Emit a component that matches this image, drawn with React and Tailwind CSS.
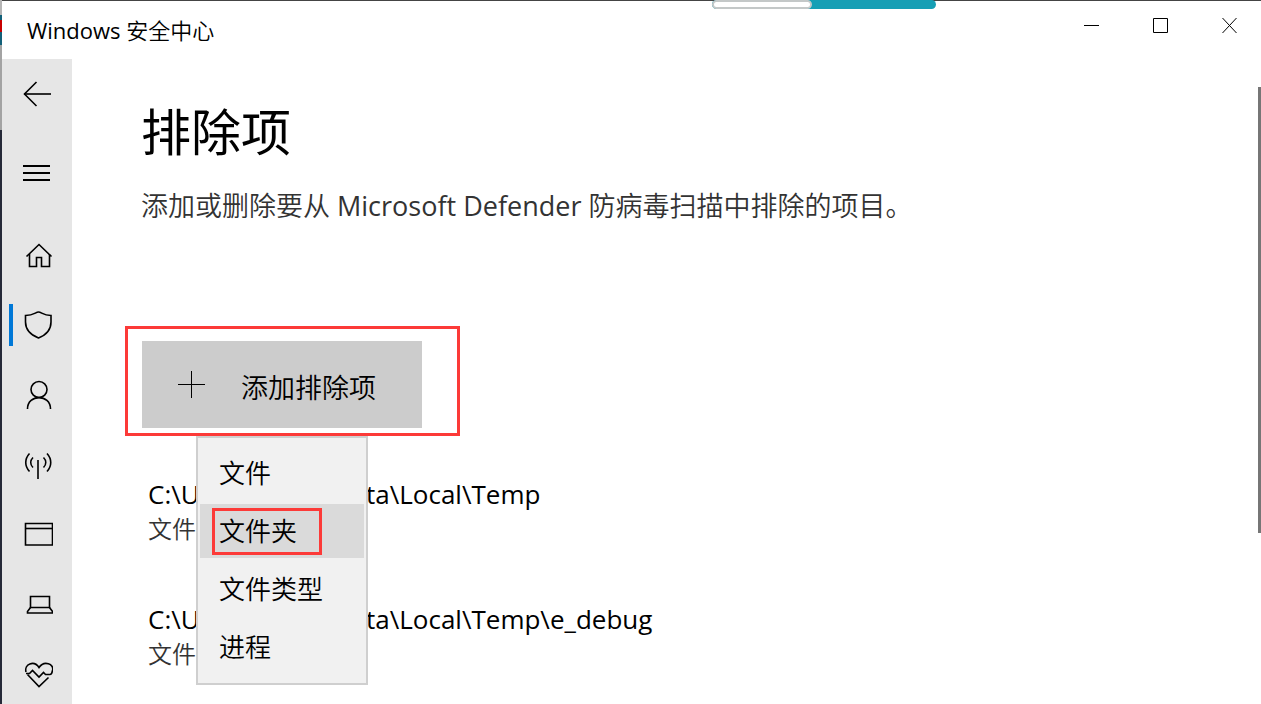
import { useState } from "react";

const iconPaths = {
  back: ["M3.5 16H30", "M15.5 4L3.5 16L15.5 28"],
  home: ["M5.5 17.5L18 5.5L30.5 17.5", "M8.5 15V27.5H15.5V18.5H20.5V27.5H28.5V15"],
  shield: [
    "M17.5 3C14.5 3 13 6.5 4.5 6.5V13C4.5 21 10 26 17.5 29C25 26 30 21 30 13V6.5C22 6.5 20.5 3 17.5 3Z",
  ],
  account: ["M10 10.5A8 8 0 1 0 26 10.5A8 8 0 1 0 10 10.5Z", "M6.5 30C6.5 14.8 29.5 14.8 29.5 30"],
  network: [
    "M17 11V30",
    "M8.5 4.5C3.5 10 3.5 17 8.5 22.5",
    "M26 4.5C31 10 31 17 26 22.5",
    "M12 8.5C9 11.5 9 15.5 12 18.5",
    "M22.5 8.5C25.5 11.5 25.5 15.5 22.5 18.5",
  ],
  app: ["M4.5 4.5H31.5V26H4.5Z", "M4.5 9.5H31.5"],
  device: ["M9.5 18.5V7.5H28.5V18.5Z", "M9.5 18.5L6.5 22.5V24H31.5V22.5L28.5 18.5"],
  health: [
    "M5 13C3 5 13 1 18 8.5C23 1 33.5 5 31.5 11.5C31 14.5 30 15.5 29 15.5H24.5L22.5 13.5L18 18L11.5 11.5L8.5 14.5H5",
    "M6.5 15.5L18 27.5L27.5 18.5",
  ],
};

const navItems = [
  { id: "home", label: "主页" },
  { id: "shield", label: "病毒和威胁防护" },
  { id: "account", label: "帐户保护" },
  { id: "network", label: "防火墙和网络保护" },
  { id: "app", label: "应用和浏览器控制" },
  { id: "device", label: "设备安全性" },
  { id: "health", label: "设备性能和运行状况" },
];

const menuItems = ["文件", "文件夹", "文件类型", "进程"];

const exclusions = [
  { start: "C:\\U", end: "ta\\Local\\Temp", type: "文件" },
  { start: "C:\\U", end: "ta\\Local\\Temp\\e_debug", type: "文件" },
];

function Icon({ name }) {
  return (
    <svg width="32" height="32" viewBox="0 0 32 32" fill="none" stroke="black" strokeWidth="1.6">
      {iconPaths[name].map((d) => (
        <path key={d} d={d} />
      ))}
    </svg>
  );
}

function TitleBar() {
  return (
    <header className="relative flex h-[59px] shrink-0 justify-between border-t border-[#444] bg-white">
      <div className="pt-[13px] pl-[25px] text-[22px] leading-8">
        <span className="font-normal">Windows</span> 安全中心
      </div>
      {/* progress bar of the window behind */}
      <div className="absolute -top-px left-[710px] flex h-[9px] w-[224px] rounded-full bg-[#169fb5]">
        <div className="w-[100px] rounded-full border-2 border-[#c4c8c8] bg-white" />
      </div>
      <div className="flex h-12 gap-1.5">
        <button aria-label="最小化" className="flex w-[63px] items-center justify-center">
          <svg width="15" height="16" stroke="black" fill="none">
            <path d="M0 8.5H15" />
          </svg>
        </button>
        <button aria-label="最大化" className="flex w-[63px] items-center justify-center">
          <svg width="15" height="16" stroke="black" fill="none">
            <path d="M0.5 1.5H14.5V15.5H0.5Z" />
          </svg>
        </button>
        <button aria-label="关闭" className="flex w-[63px] items-center justify-center">
          <svg width="15" height="16" stroke="black" fill="none">
            <path d="M0.5 1L14.5 16M14.5 1L0.5 16" />
          </svg>
        </button>
      </div>
    </header>
  );
}

function Sidebar({ active, onSelect }) {
  return (
    <nav className="flex w-[70px] shrink-0 flex-col bg-[#e6e6e6]">
      <button aria-label="返回" className="flex h-[70px] shrink-0 items-center justify-center">
        <Icon name="back" />
      </button>
      <button aria-label="菜单" className="mt-[9px] mb-3 flex h-[70px] shrink-0 items-center justify-center">
        <svg width="32" height="32" viewBox="0 0 32 32" stroke="black" strokeWidth="2">
          <path d="M2 9H29M2 16H29M2 23H29" />
        </svg>
      </button>
      {navItems.map((item) => (
        <button
          key={item.id}
          aria-label={item.label}
          onClick={() => onSelect(item.id)}
          className="relative flex h-[70px] shrink-0 items-center justify-center"
        >
          {active === item.id && <span className="absolute left-[7px] h-[42px] w-1 bg-[#0078d7]" />}
          <Icon name={item.id} />
        </button>
      ))}
    </nav>
  );
}

function AddMenu({ selected, onSelect }) {
  return (
    <div
      role="menu"
      className="absolute top-[107px] left-[68px] z-10 flex h-[249px] w-[172px] flex-col gap-1 border-2 border-[#cfcfcf] bg-[#f1f1f1] px-0.5 pt-2 text-[26px] leading-[38px]"
    >
      {menuItems.map((item) => (
        <button
          key={item}
          role="menuitem"
          onClick={() => onSelect(item)}
          className={
            item === selected
              ? "flex h-[54px] items-center bg-[#dadada] pl-3"
              : "flex h-[54px] items-center pl-[19px]"
          }
        >
          {item === selected ? (
            <span className="flex h-[47px] w-[110px] items-center border-3 border-[#fc3a38] pl-1">
              {item}
            </span>
          ) : (
            item
          )}
        </button>
      ))}
    </div>
  );
}

export default function App() {
  const [active, setActive] = useState("shield");
  const [selected, setSelected] = useState("文件夹");
  const [menuOpen, setMenuOpen] = useState(true);

  return (
    <div className="flex h-screen overflow-hidden bg-white font-['Open_Sans','Noto_Sans_CJK_SC',sans-serif] font-[350] text-black">
      {/* edge of the desktop behind the window */}
      <div className="flex w-0.5 shrink-0 flex-col bg-[#262938]">
        <div className="h-[15px] bg-[#b5b5b5]" />
        <div className="h-[5px] bg-[#126079]" />
        <div className="h-3 bg-[#c80000]" />
        <div className="h-[13px] bg-[#126079]" />
        <div className="h-[85px] bg-[#a3a3a3]" />
      </div>
      <div className="flex min-w-0 flex-1 flex-col">
        <TitleBar />
        <div className="flex min-h-0 flex-1">
          <Sidebar active={active} onSelect={setActive} />
          <main className="min-w-0 flex-1 pt-9 pl-[69px]">
            <h1 className="text-[50px] leading-[74px] font-normal">排除项</h1>
            <p className="mt-4 text-[27px] leading-[42px] text-[#333]">
              添加或删除要从 <span className="font-normal">Microsoft Defender</span>{" "}
              防病毒扫描中排除的项目。
            </p>

            <div className="relative mt-[99px] -ml-4 h-[110px] w-[335px] border-3 border-[#fc3a38] pt-3 pl-3.5">
              <button
                aria-haspopup="menu"
                aria-expanded={menuOpen}
                onClick={() => setMenuOpen(!menuOpen)}
                className="flex h-[87px] w-[280px] items-center bg-[#ccc] pl-9 text-[27px]"
              >
                <svg width="27" height="28" stroke="black">
                  <path d="M0 13.5H27M13.5 0V27" />
                </svg>
                <span className="pt-2 pl-9">添加排除项</span>
              </button>
              {menuOpen && <AddMenu selected={selected} onSelect={setSelected} />}
            </div>

            <ul className="mt-10 flex flex-col gap-[55px] pl-[7px]">
              {exclusions.map((item) => (
                <li key={item.end}>
                  <div className="flex text-[26px] leading-9 font-normal">
                    <span className="w-[218px]">{item.start}</span>
                    <span>{item.end}</span>
                  </div>
                  <div className="text-2xl leading-[34px] text-[#333]">{item.type}</div>
                </li>
              ))}
            </ul>
          </main>
          <div className="mt-7 h-[446px] w-[3px] shrink-0 bg-[#767676]" />
        </div>
      </div>
    </div>
  );
}
